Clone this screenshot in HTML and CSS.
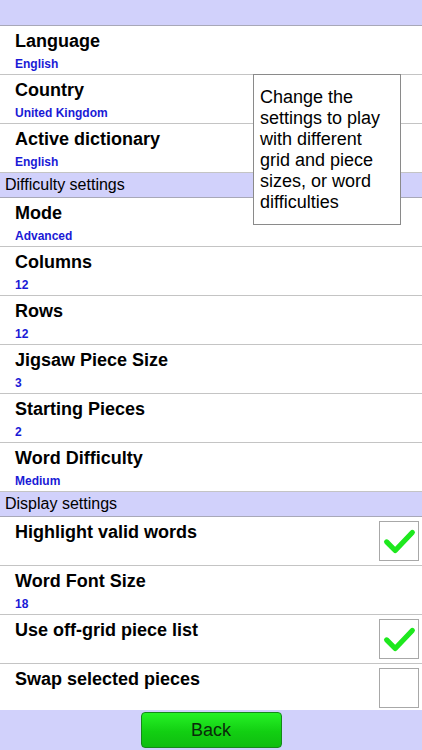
FILE: index.html
```html
<!DOCTYPE html>
<html>
<head>
<meta charset="utf-8">
<link rel="stylesheet" href="styles.css">
</head>
<body>
<div class="screen">
  <div class="topbar"></div>
  <div class="list">
    <div class="row"><div class="text"><div class="title">Language</div><div class="sub">English</div></div></div>
    <div class="row"><div class="text"><div class="title">Country</div><div class="sub">United Kingdom</div></div></div>
    <div class="row"><div class="text"><div class="title">Active dictionary</div><div class="sub">English</div></div></div>
    <div class="section">Difficulty settings</div>
    <div class="row"><div class="text"><div class="title">Mode</div><div class="sub">Advanced</div></div></div>
    <div class="row"><div class="text"><div class="title">Columns</div><div class="sub">12</div></div></div>
    <div class="row"><div class="text"><div class="title">Rows</div><div class="sub">12</div></div></div>
    <div class="row"><div class="text"><div class="title">Jigsaw Piece Size</div><div class="sub">3</div></div></div>
    <div class="row"><div class="text"><div class="title">Starting Pieces</div><div class="sub">2</div></div></div>
    <div class="row"><div class="text"><div class="title">Word Difficulty</div><div class="sub">Medium</div></div></div>
    <div class="section">Display settings</div>
    <div class="row"><div class="text"><div class="title">Highlight valid words</div></div>
      <div class="check"><svg viewBox="0 0 40 40" width="38" height="38"><path d="M7 21 L16 30 L34 11" fill="none" stroke="#1ee81e" stroke-width="5.5" stroke-linecap="round" stroke-linejoin="round"/></svg></div></div>
    <div class="row"><div class="text"><div class="title">Word Font Size</div><div class="sub">18</div></div></div>
    <div class="row"><div class="text"><div class="title">Use off-grid piece list</div></div>
      <div class="check"><svg viewBox="0 0 40 40" width="38" height="38"><path d="M7 21 L16 30 L34 11" fill="none" stroke="#1ee81e" stroke-width="5.5" stroke-linecap="round" stroke-linejoin="round"/></svg></div></div>
    <div class="row last"><div class="text"><div class="title">Swap selected pieces</div></div>
      <div class="check"></div></div>
  </div>
  <div class="bottombar"><button class="back">Back</button></div>
  <div class="tooltip">Change the settings to play with different grid and piece sizes, or word difficulties</div>
</div>
</body>
</html>
```
FILE: styles.css
```css
* { box-sizing: border-box; }
html, body { margin: 0; padding: 0; }
body { font-family: "Liberation Sans", Arial, sans-serif; background: #fff; }
.screen { position: relative; width: 422px; height: 750px; display: flex; flex-direction: column; overflow: hidden; }
.topbar { height: 26px; background: #d1d1fb; border-bottom: 1px solid #a8a8b8; flex: none; }
.list { flex: 1; overflow: hidden; display: flex; flex-direction: column; }
.row { height: 49px; flex: none; display: flex; justify-content: space-between; align-items: flex-start; padding: 4px 3px 0 15px; border-bottom: 1px solid #c4c4c4; }
.row.last { border-bottom: none; flex: 1; height: auto; }
.title { font-size: 18px; font-weight: bold; line-height: 22px; color: #000; }
.sub { font-size: 12px; font-weight: bold; line-height: 14px; margin-top: 5px; color: #1a1ad6; }
.section { height: 25px; flex: none; background: #d1d1fb; border-bottom: 1px solid #a8a8b8; padding-left: 5px; font-size: 16px; line-height: 24px; color: #000; }
.check { width: 40px; height: 40px; border: 1px solid #a8a8a8; background: #fff; display: flex; align-items: center; justify-content: center; }
.bottombar { height: 40px; flex: none; background: #d1d1fb; display: flex; justify-content: center; align-items: center; }
.back { width: 141px; height: 36px; border: 1px solid #14891a; border-radius: 4px; background: linear-gradient(#26f226, #12cf12 55%, #0fbd10); font-family: "Liberation Sans", Arial, sans-serif; font-size: 18px; color: #0a2a0a; padding: 0; }
.tooltip { position: absolute; left: 253px; top: 74px; width: 148px; height: 151px; background: #fff; border: 1px solid #8a8a8a; padding: 12px 6px 0 6px; font-size: 18px; line-height: 21px; color: #000; }
```
